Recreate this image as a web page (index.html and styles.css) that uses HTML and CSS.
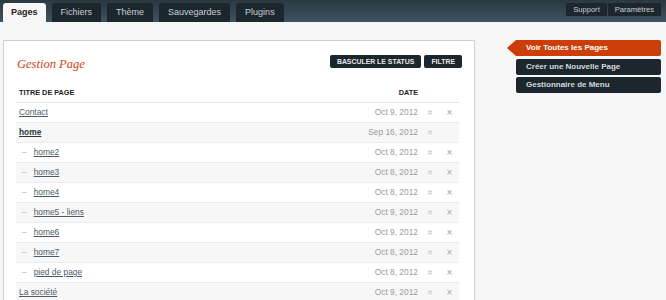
FILE: index.html
```html
<!DOCTYPE html>
<html lang="fr">
<head>
<meta charset="utf-8">
<title>Gestion Page</title>
<link rel="stylesheet" href="styles.css">
</head>
<body>
<header class="topbar">
  <nav class="tabs">
    <a class="tab active" href="#">Pages</a>
    <a class="tab" href="#">Fichiers</a>
    <a class="tab" href="#">Thème</a>
    <a class="tab" href="#">Sauvegardes</a>
    <a class="tab" href="#">Plugins</a>
  </nav>
  <nav class="util">
    <a class="util-link" href="#">Support</a>
    <a class="util-link" href="#">Paramètres</a>
  </nav>
</header>
<div class="content">
  <main class="panel">
    <div class="panel-head">
      <h2 class="title">Gestion Page</h2>
      <div class="actions">
        <a class="btn" href="#">BASCULER LE STATUS</a>
        <a class="btn" href="#">FILTRE</a>
      </div>
    </div>
    <table class="pages">
      <thead>
        <tr>
          <th class="c-title">TITRE DE PAGE</th>
          <th class="c-date">DATE</th>
          <th class="c-hash"></th>
          <th class="c-del"></th>
        </tr>
      </thead>
      <tbody>
        <tr><td class="c-title"><a href="#">Contact</a></td><td class="c-date">Oct 9, 2012</td><td class="c-hash">#</td><td class="c-del">×</td></tr>
        <tr><td class="c-title"><a class="home" href="#">home</a></td><td class="c-date">Sep 16, 2012</td><td class="c-hash">#</td><td class="c-del"></td></tr>
        <tr><td class="c-title child"><span class="dash">–</span><a href="#">home2</a></td><td class="c-date">Oct 8, 2012</td><td class="c-hash">#</td><td class="c-del">×</td></tr>
        <tr><td class="c-title child"><span class="dash">–</span><a href="#">home3</a></td><td class="c-date">Oct 8, 2012</td><td class="c-hash">#</td><td class="c-del">×</td></tr>
        <tr><td class="c-title child"><span class="dash">–</span><a href="#">home4</a></td><td class="c-date">Oct 8, 2012</td><td class="c-hash">#</td><td class="c-del">×</td></tr>
        <tr><td class="c-title child"><span class="dash">–</span><a href="#">home5 - liens</a></td><td class="c-date">Oct 9, 2012</td><td class="c-hash">#</td><td class="c-del">×</td></tr>
        <tr><td class="c-title child"><span class="dash">–</span><a href="#">home6</a></td><td class="c-date">Oct 9, 2012</td><td class="c-hash">#</td><td class="c-del">×</td></tr>
        <tr><td class="c-title child"><span class="dash">–</span><a href="#">home7</a></td><td class="c-date">Oct 8, 2012</td><td class="c-hash">#</td><td class="c-del">×</td></tr>
        <tr><td class="c-title child"><span class="dash">–</span><a href="#">pied de page</a></td><td class="c-date">Oct 8, 2012</td><td class="c-hash">#</td><td class="c-del">×</td></tr>
        <tr><td class="c-title"><a href="#">La société</a></td><td class="c-date">Oct 9, 2012</td><td class="c-hash">#</td><td class="c-del">×</td></tr>
      </tbody>
    </table>
  </main>
  <aside class="sidebar">
    <a class="side-item current" href="#">Voir Toutes les Pages</a>
    <a class="side-item" href="#">Créer une Nouvelle Page</a>
    <a class="side-item" href="#">Gestionnaire de Menu</a>
  </aside>
</div>
</body>
</html>
```

FILE: styles.css
```css
* { box-sizing: border-box; }
html, body { margin: 0; padding: 0; }
body {
  background: #f6f6f6;
  font-family: "Liberation Sans", Arial, sans-serif;
  color: #333;
  overflow: hidden;
  height: 300px;
}
a { text-decoration: none; }

.topbar {
  height: 22px;
  background: linear-gradient(#2a3841, #3f535f);
  display: flex;
  justify-content: space-between;
  align-items: flex-start;
}
.tabs {
  display: flex;
  align-items: flex-end;
  gap: 6px;
  padding-left: 3px;
  height: 22px;
}
.tab {
  height: 19px;
  line-height: 19px;
  padding: 0 9px;
  font-size: 9px;
  color: #c9d0d4;
  background: #1c262d;
  border-radius: 3px 3px 0 0;
}
.tab.active {
  background: #f7f7f7;
  color: #222;
  font-weight: bold;
  padding: 0 8px;
}
.util {
  display: flex;
  gap: 1px;
  margin: 3px 5px 0 0;
}
.util-link {
  height: 13px;
  line-height: 13px;
  font-size: 7.6px;
  color: #c9d0d4;
  background: #1c262d;
  padding: 0 7px;
  border-radius: 1px;
}

.content {
  display: flex;
  align-items: flex-start;
  padding: 18px 0 0 3px;
}
.panel {
  width: 472px;
  height: 270px;
  background: #fff;
  border: 1px solid #cfcfcf;
  padding: 0 12px;
}
.panel-head {
  display: flex;
  justify-content: space-between;
  align-items: center;
  margin-top: 14px;
  height: 13px;
}
.title {
  margin: 6px 0 0 1px;
  font-family: "Liberation Serif", "Times New Roman", serif;
  font-style: italic;
  font-weight: normal;
  font-size: 12.5px;
  color: #cc4216;
}
.actions {
  display: flex;
  gap: 3px;
}
.btn {
  height: 13px;
  line-height: 13px;
  padding: 0 7px;
  font-size: 6.9px;
  font-weight: bold;
  color: #e6e9eb;
  background: #1c262d;
  border-radius: 2px;
}

.pages {
  width: calc(100% - 3px);
  border-collapse: collapse;
  margin-top: 16px;
}
.pages th {
  height: 18px;
  font-size: 7.3px;
  font-weight: bold;
  color: #222;
  text-align: left;
  border-bottom: 1px solid #e4e4e4;
  padding: 0 0 0 3px;
  vertical-align: middle;
}
.pages td {
  height: 20px;
  font-size: 8.4px;
  border-bottom: 1px solid #ececec;
  padding: 0 0 0 3px;
  vertical-align: middle;
}
.pages tbody tr:nth-child(even) td { background: #f7f7f7; }
.pages th.c-date, .pages td.c-date {
  text-align: right;
  padding: 0 2px 0 0;
}
.pages td.c-date { color: #9a9a9a; }
.c-hash { width: 20px; text-align: center; }
.c-del { width: 19px; text-align: center; }
.pages td.c-hash { color: #c4c4c4; font-size: 8px; padding: 0; text-align: center; }
.pages td.c-del { color: #a0a0a0; font-size: 10px; padding: 0; text-align: center; }
.pages td a {
  color: #4b5b66;
  text-decoration: underline;
}
.pages td a.home {
  color: #2c3840;
  font-weight: bold;
}
.pages td.child { padding-left: 6px; }
.dash {
  color: #b0b0b0;
  margin-right: 7px;
}

.sidebar {
  display: flex;
  flex-direction: column;
  gap: 2.5px;
  margin-left: 41px;
  width: 145px;
}
.side-item {
  position: relative;
  height: 16px;
  line-height: 16px;
  padding-left: 10px;
  font-size: 8px;
  font-weight: bold;
  color: #d6dadc;
  background: #1c262d;
  border-radius: 2px;
}
.side-item.current {
  background: #cc3d0a;
  color: #fff;
  border-radius: 0 2px 2px 0;
}
.side-item.current::before {
  content: "";
  position: absolute;
  left: -9px;
  top: 0;
  border-right: 9px solid #cc3d0a;
  border-top: 8px solid transparent;
  border-bottom: 8px solid transparent;
}
```
